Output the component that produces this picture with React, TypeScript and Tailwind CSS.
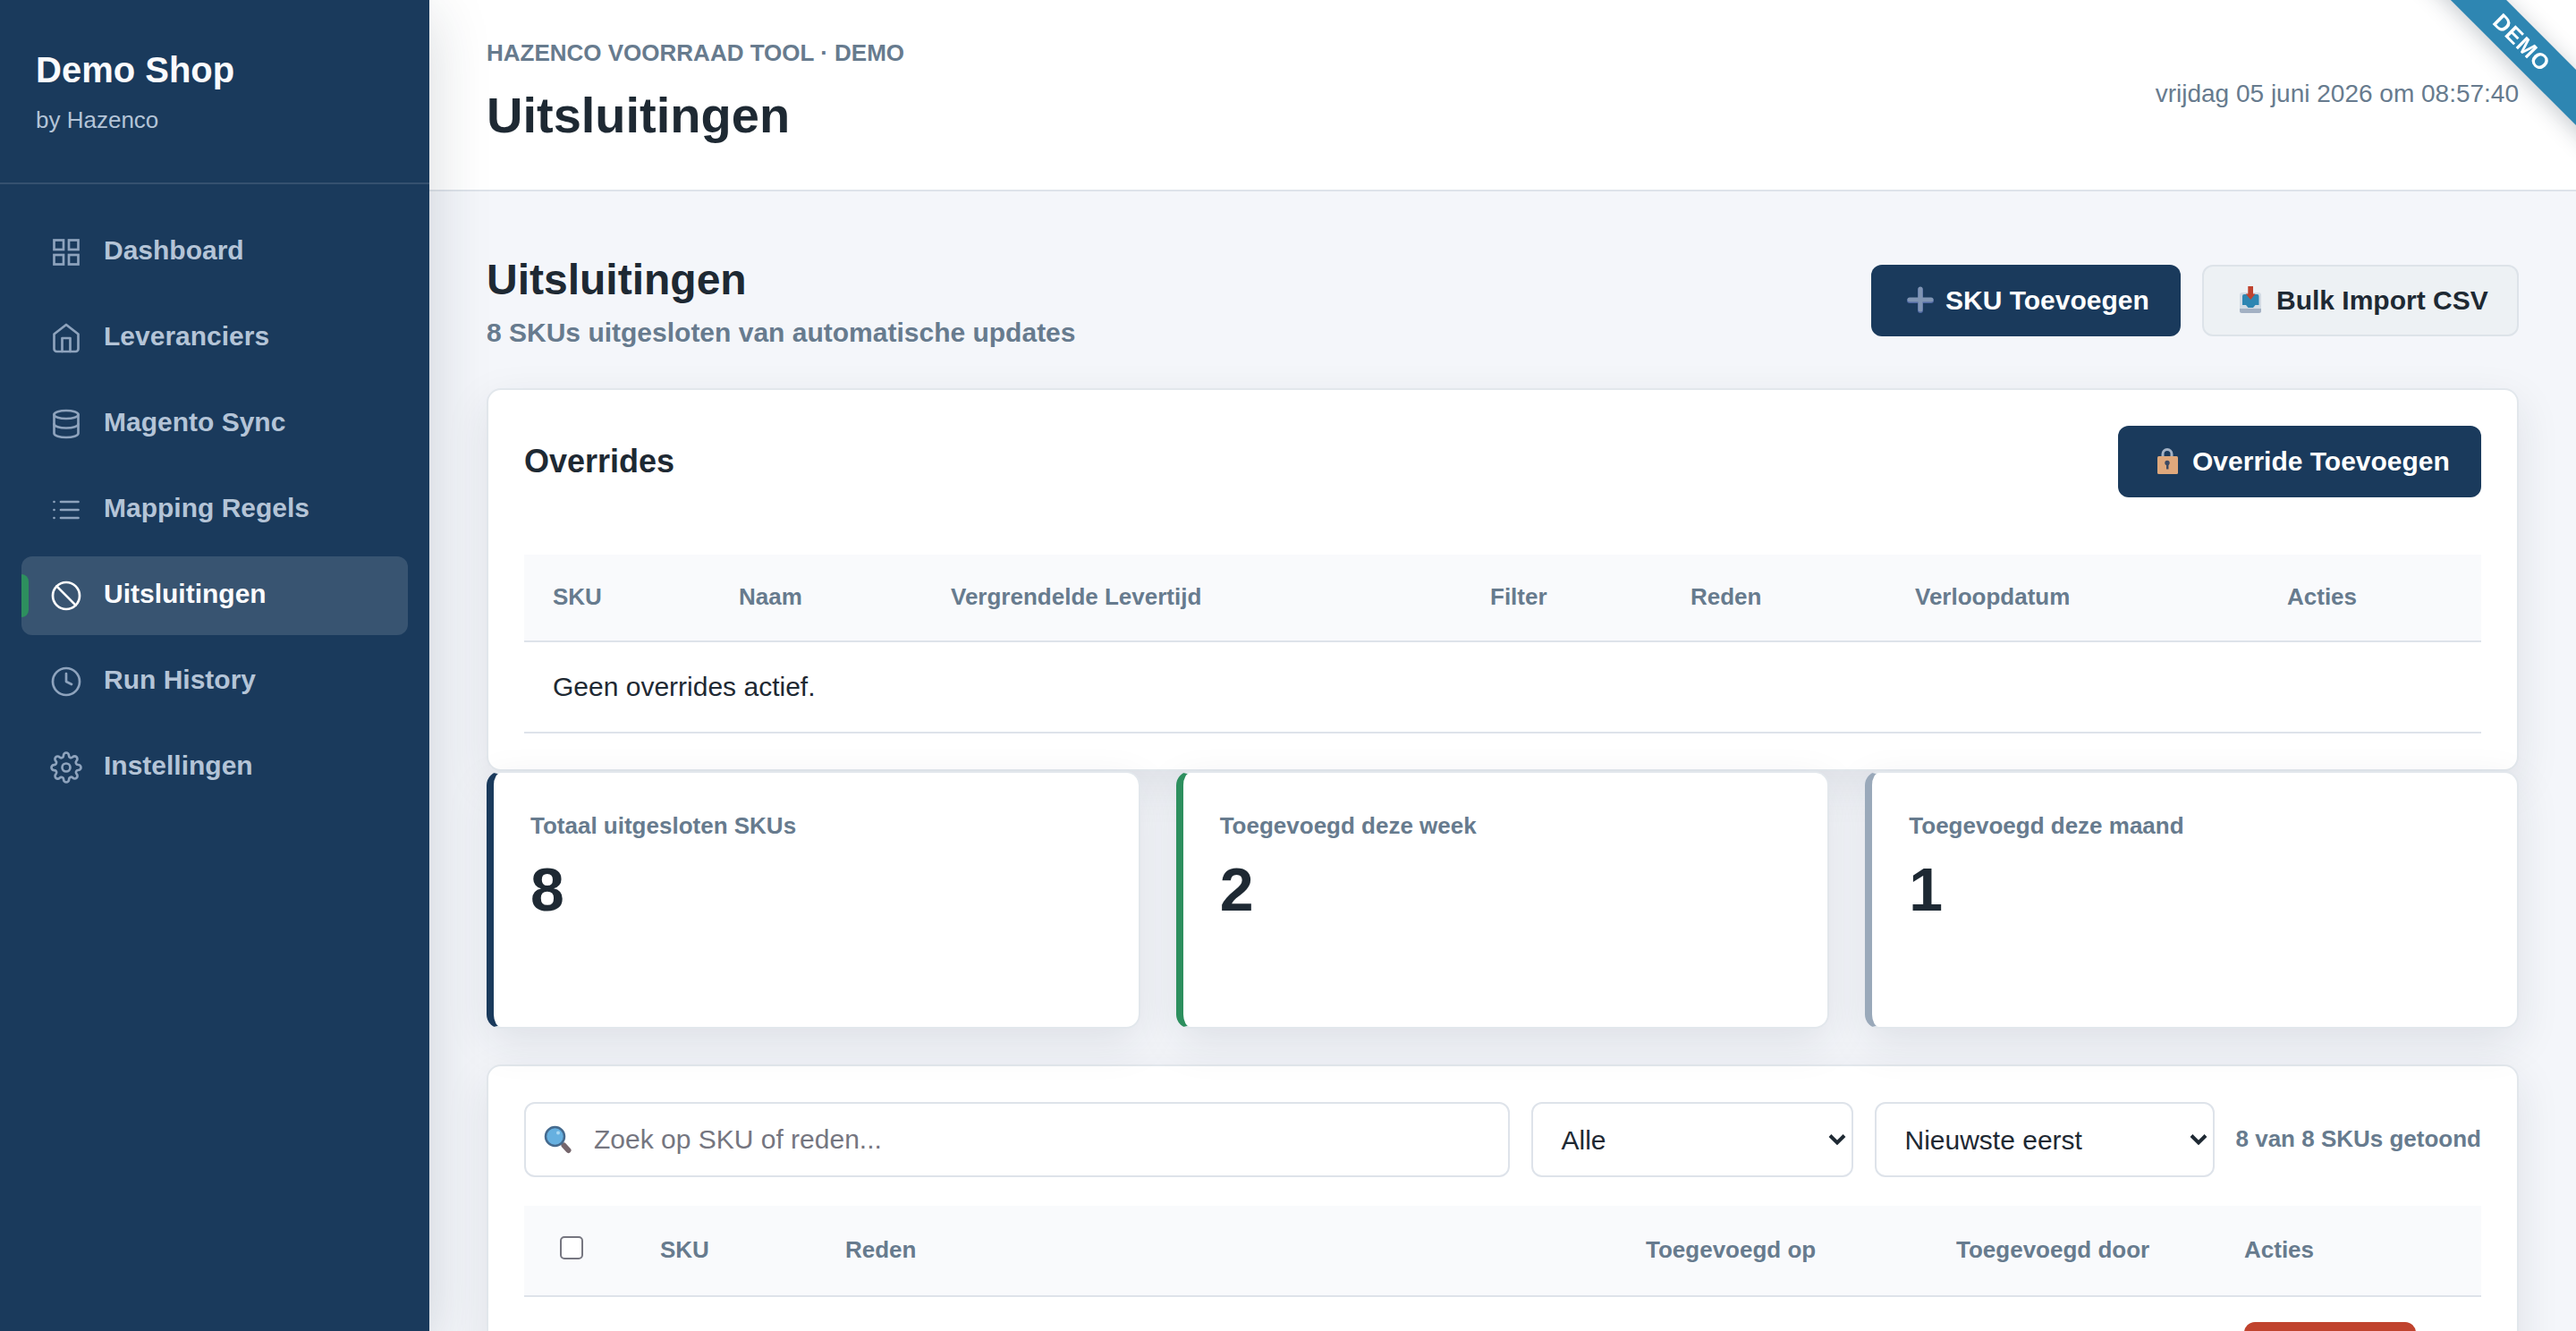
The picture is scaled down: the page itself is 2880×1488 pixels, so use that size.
import { useState } from 'react';

const navItems = [
    { key: 'dashboard', label: 'Dashboard' },
    { key: 'suppliers', label: 'Leveranciers' },
    { key: 'sync', label: 'Magento Sync' },
    { key: 'mapping', label: 'Mapping Regels' },
    { key: 'exclusions', label: 'Uitsluitingen' },
    { key: 'history', label: 'Run History' },
    { key: 'settings', label: 'Instellingen' },
];

const stats = [
    { label: 'Totaal uitgesloten SKUs', value: 8, border: 'border-l-[#1a3a5c]' },
    { label: 'Toegevoegd deze week', value: 2, border: 'border-l-[#2d8f5e]' },
    { label: 'Toegevoegd deze maand', value: 1, border: 'border-l-[#9aa9ba]' },
];

const cardShadow = 'shadow-[0_16px_48px_rgba(26,43,60,0.1)]';

function NavIcon({ name }: { name: string }) {
    return (
        <svg viewBox="0 0 24 24" className="w-9 h-9 shrink-0" fill="none" stroke="currentColor" strokeWidth="1.8" strokeLinecap="round" strokeLinejoin="round">
            {name === 'dashboard' && (
                <g strokeLinejoin="miter">
                    <rect x="3" y="3" width="7" height="7" />
                    <rect x="14" y="3" width="7" height="7" />
                    <rect x="3" y="14" width="7" height="7" />
                    <rect x="14" y="14" width="7" height="7" />
                </g>
            )}
            {name === 'suppliers' && (
                <>
                    <path d="M3 9l9-7 9 7v11a2 2 0 0 1-2 2H5a2 2 0 0 1-2-2z" />
                    <path d="M9 22V12h6v10" />
                </>
            )}
            {name === 'sync' && (
                <>
                    <ellipse cx="12" cy="5" rx="9" ry="3" />
                    <path d="M21 12c0 1.66-4 3-9 3s-9-1.34-9-3" />
                    <path d="M3 5v14c0 1.66 4 3 9 3s9-1.34 9-3V5" />
                </>
            )}
            {name === 'mapping' && <path d="M8 6h13M8 12h13M8 18h13M3 6h.01M3 12h.01M3 18h.01" />}
            {name === 'exclusions' && (
                <>
                    <circle cx="12" cy="12" r="10" />
                    <path d="M4.93 4.93l14.14 14.14" />
                </>
            )}
            {name === 'history' && (
                <>
                    <circle cx="12" cy="12" r="10" />
                    <path d="M12 6v6l4 2" />
                </>
            )}
            {name === 'settings' && (
                <>
                    <circle cx="12" cy="12" r="3" />
                    <path d="M19.4 15a1.65 1.65 0 0 0 .33 1.82l.06.06a2 2 0 0 1-2.83 2.83l-.06-.06a1.65 1.65 0 0 0-1.82-.33 1.65 1.65 0 0 0-1 1.51V21a2 2 0 0 1-4 0v-.09A1.65 1.65 0 0 0 9 19.4a1.65 1.65 0 0 0-1.82.33l-.06.06a2 2 0 0 1-2.83-2.83l.06-.06a1.65 1.65 0 0 0 .33-1.82 1.65 1.65 0 0 0-1.51-1H3a2 2 0 0 1 0-4h.09A1.65 1.65 0 0 0 4.6 9a1.65 1.65 0 0 0-.33-1.82l-.06-.06a2 2 0 0 1 2.83-2.83l.06.06a1.65 1.65 0 0 0 1.82.33H9a1.65 1.65 0 0 0 1-1.51V3a2 2 0 0 1 4 0v.09a1.65 1.65 0 0 0 1 1.51 1.65 1.65 0 0 0 1.82-.33l.06-.06a2 2 0 0 1 2.83 2.83l-.06.06a1.65 1.65 0 0 0-.33 1.82V9a1.65 1.65 0 0 0 1.51 1H21a2 2 0 0 1 0 4h-.09a1.65 1.65 0 0 0-1.51 1z" />
                </>
            )}
        </svg>
    );
}

function PlusIcon() {
    return (
        <svg viewBox="0 0 39 36" className="w-[39px] h-9 mr-2 shrink-0" strokeWidth="6" strokeLinecap="round">
            <path d="M19 6v23M7 18h24" stroke="#5069a3" />
            <path d="M19 5v23M7 17h24" stroke="#8095b3" strokeWidth="5" />
        </svg>
    );
}

function InboxIcon() {
    return (
        <svg viewBox="0 0 39 36" className="w-[39px] h-9 mr-2 shrink-0">
            <rect x="6" y="9" width="24" height="23" rx="3" fill="#d3dbe4" />
            <path d="M9 13a2 2 0 0 1 2-2h14.500a2 2 0 0 1 2 2v10h-4l-2.500 3h-5.500l-2.500-3H9z" fill="#2e86b2" />
            <path d="M6 27h24v2.500a2.500 2.500 0 0 1-2.500 2.500h-19A2.500 2.500 0 0 1 6 29.500z" fill="#a3b1c3" />
            <path d="M15.300 2h5.700v8.500h2.500L18.200 17l-5.400-6.500h2.500z" fill="#c0432e" />
        </svg>
    );
}

function LockIcon() {
    return (
        <svg viewBox="0 0 39 36" className="w-[39px] h-9 mr-2 shrink-0">
            <path d="M14 13V9.500a5 5 0 0 1 10 0V13" fill="none" stroke="#a3b1c4" strokeWidth="3" />
            <rect x="8" y="12" width="23" height="20" rx="1.500" fill="#dfa87c" />
            <circle cx="19" cy="19.500" r="2.700" fill="#3d4a63" />
            <path d="M18 20h2.500v6.500H18z" fill="#3d4a63" />
        </svg>
    );
}

function SearchIcon() {
    return (
        <svg viewBox="0 0 32 32" className="w-8 h-8 shrink-0">
            <path d="M20 20l3 3" stroke="#7f8794" strokeWidth="3" />
            <path d="M22.500 22.500l5 5.500" stroke="#75666c" strokeWidth="6" strokeLinecap="round" />
            <circle cx="12.500" cy="12.500" r="10.500" fill="#66b0e0" stroke="#456a8e" strokeWidth="2.500" />
            <circle cx="16" cy="8.500" r="2" fill="#a9d8f3" />
        </svg>
    );
}

function SelectBox({ label, className }: { label: string; className: string }) {
    return (
        <button className={`flex items-center justify-between h-[84px] border-2 border-[#dee3ea] rounded-xl bg-white pl-8 pr-1.5 text-[30px] text-[#1e2933] ${className}`}>
            {label}
            <svg viewBox="0 0 20 14" className="w-5 h-3.5" fill="none" stroke="#1e2933" strokeWidth="4">
                <path d="M2 2.500l8 8 8-8" />
            </svg>
        </button>
    );
}

export default function App() {
    const [active, setActive] = useState('exclusions');
    const [query, setQuery] = useState('');
    const [allChecked, setAllChecked] = useState(false);

    return (
        <div className="flex h-[1488px] overflow-hidden bg-[#f4f6fa] text-[#1e2933] font-['Liberation_Sans',Arial,sans-serif]">
            {/* Sidebar */}
            <aside className="relative z-10 w-[480px] shrink-0 bg-[#1a3a5c] shadow-[0_16px_64px_rgba(26,43,60,0.18)]">
                <div className="h-[206px] border-b-2 border-white/12 px-10 pt-[54px]">
                    <div className="text-[40px] leading-[48px] font-bold text-[#fafbfd]">Demo Shop</div>
                    <div className="mt-3.5 text-[26px] leading-[37px] text-[#b4c4d7]">by Hazenco</div>
                </div>
                <nav className="flex flex-col gap-2 px-6 py-8">
                    {navItems.map((item) => (
                        <a
                            key={item.key}
                            href="#"
                            onClick={() => setActive(item.key)}
                            className={`relative flex items-center gap-6 h-[88px] px-8 rounded-xl text-[30px] font-bold ${active === item.key ? 'bg-white/13 text-[#fafbfd]' : 'text-[#b4c4d7]'}`}
                        >
                            {active === item.key && <span className="absolute left-0 top-5 w-2 h-12 rounded-r-lg bg-[#2d8f5e]" />}
                            <span className={active === item.key ? 'text-white' : 'text-[#8ea3bd]'}>
                                <NavIcon name={item.key} />
                            </span>
                            <span className="pb-1.5">{item.label}</span>
                        </a>
                    ))}
                </nav>
            </aside>

            <div className="flex-1 min-w-0">
                {/* Topbar */}
                <header className="flex items-center justify-between h-[214px] bg-white border-b-2 border-[#dee3ea] px-16">
                    <div className="pb-[7px]">
                        <div className="text-[26px] leading-[40px] font-bold text-[#677b8e]">HAZENCO VOORRAAD TOOL · DEMO</div>
                        <h1 className="mt-3 text-[56px] leading-[76px] font-bold">Uitsluitingen</h1>
                    </div>
                    <div className="pb-0.5 text-[28px] text-[#677b8e]">vrijdag 05 juni 2026 om 08:57:40</div>
                </header>

                <main className="px-16 pt-16">
                    <div className="flex items-center justify-between h-[116px]">
                        <div className="pt-[7px]">
                            <h2 className="text-[48px] leading-[58px] font-bold">Uitsluitingen</h2>
                            <p className="text-[30px] leading-[48px] mt-1.5 font-bold text-[#677b8e]">8 SKUs uitgesloten van automatische updates</p>
                        </div>
                        <div className="flex gap-6">
                            <button className="flex items-center w-[346px] h-20 pl-9 rounded-xl bg-[#1a3a5c] text-white text-[30px] font-bold whitespace-nowrap">
                                <PlusIcon />
                                <span className="pb-0.5">SKU Toevoegen</span>
                            </button>
                            <button className="flex items-center w-[354px] h-20 pl-[34px] rounded-xl border-2 border-[#dde3e9] bg-[#edf1f4] text-[30px] font-bold whitespace-nowrap">
                                <InboxIcon />
                                <span className="pb-0.5">Bulk Import CSV</span>
                            </button>
                        </div>
                    </div>

                    {/* Overrides */}
                    <section className={`mt-10 h-[428px] rounded-2xl border-2 border-[#e2e7ec] bg-white p-10 ${cardShadow}`}>
                        <div className="flex items-center justify-between">
                            <h3 className="text-[36px] font-bold">Overrides</h3>
                            <button className="flex items-center w-[406px] h-20 pl-9 rounded-xl bg-[#1a3a5c] text-white text-[30px] font-bold whitespace-nowrap">
                                <LockIcon />
                                <span className="pb-0.5">Override Toevoegen</span>
                            </button>
                        </div>
                        <table className="mt-16 w-full table-fixed text-left border-separate border-spacing-0">
                            <colgroup>
                                <col className="w-[208px]" />
                                <col className="w-[237px]" />
                                <col className="w-[603px]" />
                                <col className="w-[224px]" />
                                <col className="w-[251px]" />
                                <col className="w-[416px]" />
                                <col />
                            </colgroup>
                            <thead>
                                <tr>
                                    {['SKU', 'Naam', 'Vergrendelde Levertijd', 'Filter', 'Reden', 'Verloopdatum', 'Acties'].map((h) => (
                                        <th key={h} className="h-[98px] px-8 pt-0 pb-0.5 bg-[#f9fafc] border-b-2 border-[#dee3ea] text-[26px] font-bold text-[#677b8e]">
                                            {h}
                                        </th>
                                    ))}
                                </tr>
                            </thead>
                            <tbody>
                                <tr>
                                    <td colSpan={7} className="h-[102px] px-8 pt-0 pb-0.5 border-b-2 border-[#dee3ea] text-[30px]">
                                        Geen overrides actief.
                                    </td>
                                </tr>
                            </tbody>
                        </table>
                    </section>

                    {/* Stats */}
                    <div className="relative grid grid-cols-3 gap-10">
                        {stats.map((s) => (
                            <div key={s.label} className={`h-72 rounded-2xl border-2 border-l-8 border-[#e2e7ec] ${s.border} bg-white pl-[41px] pr-10 pt-10 ${cardShadow}`}>
                                <div className="text-[26px] leading-[38px] font-bold text-[#677b8e]">{s.label}</div>
                                <div className="mt-2.5 text-[68px] leading-[84px] font-bold">{s.value}</div>
                            </div>
                        ))}
                    </div>

                    {/* Exclusion list */}
                    <section className={`mt-10 h-[900px] rounded-2xl border-2 border-[#e2e7ec] bg-white p-10 ${cardShadow}`}>
                        <div className="flex items-center gap-6">
                            <label className="flex flex-1 items-center h-[84px] border-2 border-[#dee3ea] rounded-xl pl-5">
                                <SearchIcon />
                                <input
                                    type="text"
                                    placeholder="Zoek op SKU of reden..."
                                    value={query}
                                    onChange={(e) => setQuery(e.target.value)}
                                    className="flex-1 ml-6 pb-0.5 text-[30px] outline-none placeholder:text-[#757680]"
                                />
                            </label>
                            <SelectBox label="Alle" className="w-[360px]" />
                            <SelectBox label="Nieuwste eerst" className="w-[380px]" />
                            <span className="pb-0.5 text-[26px] font-bold text-[#677b8e]">8 van 8 SKUs getoond</span>
                        </div>
                        <table className="mt-8 w-full table-fixed text-left border-separate border-spacing-0">
                            <colgroup>
                                <col className="w-[120px]" />
                                <col className="w-[207px]" />
                                <col className="w-[895px]" />
                                <col className="w-[347px]" />
                                <col className="w-[322px]" />
                                <col />
                            </colgroup>
                            <thead>
                                <tr className="text-[26px] text-[#677b8e]">
                                    <th className="h-[102px] pl-10 py-0 bg-[#f9fafc] border-b-2 border-[#dee3ea]">
                                        <input
                                            type="checkbox"
                                            checked={allChecked}
                                            onChange={(e) => setAllChecked(e.target.checked)}
                                            className="block appearance-none w-[26px] h-[26px] mb-1.5 rounded-[5px] border-2 border-[#767680] bg-white"
                                        />
                                    </th>
                                    {['SKU', 'Reden', 'Toegevoegd op', 'Toegevoegd door', 'Acties'].map((h) => (
                                        <th key={h} className="h-[102px] px-8 pt-0 pb-0.5 bg-[#f9fafc] border-b-2 border-[#dee3ea] font-bold">
                                            {h}
                                        </th>
                                    ))}
                                </tr>
                            </thead>
                            <tbody>
                                <tr>
                                    <td colSpan={5} />
                                    <td className="px-8 pt-7">
                                        <button className="block w-48 h-16 rounded-xl bg-[#c0432e]" />
                                    </td>
                                </tr>
                            </tbody>
                        </table>
                    </section>
                </main>
            </div>

            {/* Demo ribbon */}
            <div className="fixed z-20 top-0 right-0 w-60 h-60 overflow-hidden pointer-events-none">
                <div className="absolute top-[26px] right-[-119px] w-[360px] h-11 rotate-45 flex items-center justify-center bg-[#2e86b2] text-white text-[25px] font-bold tracking-[1px] shadow-[0_4px_24px_rgba(26,43,60,0.25)]">
                    DEMO
                </div>
            </div>
        </div>
    );
}
